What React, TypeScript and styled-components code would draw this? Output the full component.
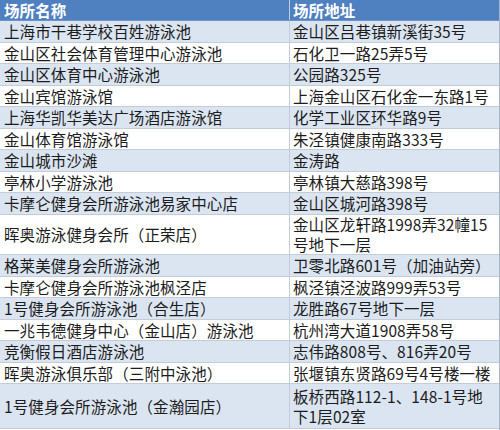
import React from "react";
import styled, { createGlobalStyle } from "styled-components";

const GlobalStyle = createGlobalStyle`
  html, body {
    margin: 0;
    padding: 0;
    background: #ffffff;
  }
  body {
    font-family: "Noto Sans CJK SC", "Noto Sans", sans-serif;
  }
`;

const Sheet = styled.div`
  width: 500px;
  height: 430px;
  overflow: hidden;
  background: #ffffff;
  border-right: 1px solid #a9b4c4;
  box-sizing: border-box;
`;

const Row = styled.div<{ $tall?: number; $shade?: boolean; $head?: boolean }>`
  display: grid;
  grid-template-columns: 290px 1fr;
  height: ${(p) => (p.$head ? 21 : p.$tall ?? 21.5)}px;
  box-sizing: border-box;
  border-bottom: 1px solid ${(p) => (p.$head ? "#6f93c4" : "#c3ccd8")};
  background: ${(p) => (p.$head ? "#4f80c0" : p.$shade ? "#dbe5f1" : "#ffffff")};
  color: ${(p) => (p.$head ? "#ffffff" : "#1c1c1c")};
  font-weight: ${(p) => (p.$head ? 700 : 400)};
`;

const Cell = styled.div<{ $first?: boolean }>`
  display: flex;
  flex-direction: column;
  justify-content: center;
  padding-left: ${(p) => (p.$first ? 4 : 3)}px;
  font-size: 15.5px;
  line-height: 20px;
  white-space: nowrap;
  overflow: hidden;
  letter-spacing: 0.1px;
  border-right: ${(p) => (p.$first ? "1px solid #c3ccd8" : "none")};
`;

type Place = { name: string; addr: string[]; tall?: number };

const places: Place[] = [
  { name: "上海市干巷学校百姓游泳池", addr: ["金山区吕巷镇新溪街35号"] },
  { name: "金山区社会体育管理中心游泳池", addr: ["石化卫一路25弄5号"] },
  { name: "金山区体育中心游泳池", addr: ["公园路325号"] },
  { name: "金山宾馆游泳馆", addr: ["上海金山区石化金一东路1号"] },
  { name: "上海华凯华美达广场酒店游泳馆", addr: ["化学工业区环华路9号"] },
  { name: "金山体育馆游泳馆", addr: ["朱泾镇健康南路333号"] },
  { name: "金山城市沙滩", addr: ["金涛路"] },
  { name: "亭林小学游泳池", addr: ["亭林镇大慈路398号"] },
  { name: "卡摩仑健身会所游泳池易家中心店", addr: ["金山区城河路398号"] },
  {
    name: "晖奥游泳健身会所（正荣店）",
    addr: ["金山区龙轩路1998弄32幢15", "号地下一层"],
    tall: 40.5,
  },
  { name: "格莱美健身会所游泳池", addr: ["卫零北路601号（加油站旁）"] },
  { name: "卡摩仑健身会所游泳池枫泾店", addr: ["枫泾镇泾波路999弄53号"] },
  { name: "1号健身会所游泳池（合生店）", addr: ["龙胜路67号地下一层"] },
  { name: "一兆韦德健身中心（金山店）游泳池", addr: ["杭州湾大道1908弄58号"] },
  { name: "竞衡假日酒店游泳池", addr: ["志伟路808号、816弄20号"] },
  { name: "晖奥游泳俱乐部（三附中泳池）", addr: ["张堰镇东贤路69号4号楼一楼"] },
  {
    name: "1号健身会所游泳池（金瀚园店）",
    addr: ["板桥西路112-1、148-1号地", "下1层02室"],
    tall: 45,
  },
];

export default function App() {
  return (
    <>
      <GlobalStyle />
      <Sheet>
        <Row $head>
          <Cell $first>场所名称</Cell>
          <Cell>场所地址</Cell>
        </Row>
        {places.map((p, i) => (
          <Row key={p.name} $shade={i % 2 === 0} $tall={p.tall}>
            <Cell $first>{p.name}</Cell>
            <Cell>
              {p.addr.map((line) => (
                <span key={line}>{line}</span>
              ))}
            </Cell>
          </Row>
        ))}
      </Sheet>
    </>
  );
}
